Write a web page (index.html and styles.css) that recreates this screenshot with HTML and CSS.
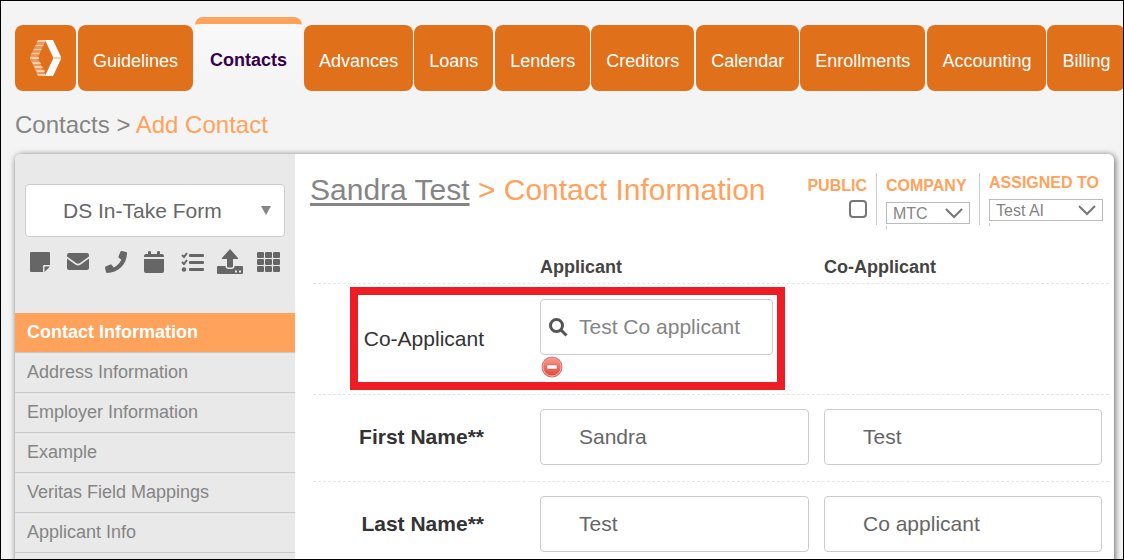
FILE: index.html
```html
<!DOCTYPE html>
<html lang="en">
<head>
  <meta charset="UTF-8" />
  <meta name="viewport" content="width=device-width, initial-scale=1.0"/>
  <title>Add Contact</title>
  <link rel="stylesheet" href="styles.css">
</head>
<body>

  <nav class="tabs">
    <a href="#" class="tab logo" aria-label="Home">
      <svg width="31" height="36" viewBox="0 0 31 36">
        <path fill="#ea9a5e" d="M8 0h8L8 17H0zM0 19h8l8 17H8z"/>
        <path fill="#f6cfb0" d="M8 0h8l-1 2H7zM6 5h8l-1 1H5zM4 9h8l-1 1H3zM2 13h8l-1 1H1zM0 17h9v2H0zM2 22h8l1 2H3zM4 26h8l1 2H5zM6 30h8l1 2H7zM7 34h8l1 2H8z"/>
        <path fill="#fff" d="M15 0h8l8 17h-8zM23 19h8l-8 17h-8z"/>
        <path fill="#f6cfb0" d="M23 17h8v2h-8z"/>
      </svg>
    </a>
    <a href="#" class="tab">Guidelines</a>
    <a href="#" class="tab active">Contacts</a>
    <a href="#" class="tab">Advances</a>
    <a href="#" class="tab">Loans</a>
    <a href="#" class="tab">Lenders</a>
    <a href="#" class="tab">Creditors</a>
    <a href="#" class="tab">Calendar</a>
    <a href="#" class="tab">Enrollments</a>
    <a href="#" class="tab">Accounting</a>
    <a href="#" class="tab">Billing</a>
  </nav>

  <h1 class="breadcrumb">Contacts &gt; <span>Add Contact</span></h1>

  <div class="card">
    <aside class="sidebar">
      <div class="form-picker">
        <select aria-label="Form">
          <option>DS In-Take Form</option>
        </select>
        <svg class="caret" width="10" height="9" viewBox="0 0 10 9"><path fill="#858585" d="M0 0h10L5 9z"/></svg>
      </div>

      <div class="tools">
        <button type="button" aria-label="Note">
          <svg width="20" height="20" viewBox="0 0 20 20"><path d="M1 0h18q1 0 1 1v12h-6q-1 0-1 1v6H1q-1 0-1-1V1q0-1 1-1zM14.500 14.500H20L14.500 20z"/></svg>
        </button>
        <button type="button" aria-label="Email">
          <svg width="22" height="17" viewBox="0 0 22 17"><path d="M2 0h18q2 0 2 2v1.500L13 10q-2 1.500-4 0L0 3.500V2q0-2 2-2zM0 5.500l8.200 6q2.800 2 5.600 0l8.200-6V15q0 2-2 2H2q-2 0-2-2z"/></svg>
        </button>
        <button type="button" aria-label="Call">
          <svg width="22" height="22" viewBox="0 0 512 512"><path d="M493.400 24.600l-104-24c-11.300-2.600-22.900 3.300-27.500 13.900l-48 112c-4.200 9.800-1.400 21.300 6.900 28l60.600 49.600c-36 76.700-98.900 140.500-177.200 177.200l-49.600-60.600c-6.800-8.300-18.200-11.100-28-6.900l-112 48C3.900 366.500-2 378.100.6 389.400l24 104C27.100 504.200 36.700 512 48 512c256.100 0 464-207.500 464-464 0-11.200-7.700-20.900-18.600-23.400z"/></svg>
        </button>
        <button type="button" aria-label="Calendar">
          <svg width="20" height="22" viewBox="0 0 20 22"><path d="M0 6V5q0-2 2-2h2V1q0-1 1.500-1T7 1v2h6V1q0-1 1.500-1T16 1v2h2q2 0 2 2v1zM0 8h20v12q0 2-2 2H2q-2 0-2-2z"/></svg>
        </button>
        <button type="button" aria-label="Tasks">
          <svg width="23" height="20" viewBox="0 0 23 20"><path d="M9 2h13q1 0 1 1v1q0 1-1 1H9q-1 0-1-1V3q0-1 1-1zM9 9h13q1 0 1 1v1q0 1-1 1H9q-1 0-1-1v-1q0-1 1-1zM9 16h13q1 0 1 1v1q0 1-1 1H9q-1 0-1-1v-1q0-1 1-1z"/><circle cx="3" cy="17.500" r="2.200"/><path class="stroke" d="M1 3l2 2 3-4M1 10l2 2 3-4"/></svg>
        </button>
        <button type="button" aria-label="Upload">
          <svg width="26" height="25" viewBox="0 0 26 25"><path d="M13 0l8 9q.500 1-.500 1H16v7q0 1.500-1.500 1.500h-3Q10 18.500 10 17v-7H5.500q-1 0-.500-1z"/><path fill-rule="evenodd" d="M1 17h7.500q0 3 3 3h3q3 0 3-3H25q1 0 1 1v6q0 1-1 1H1q-1 0-1-1v-6q0-1 1-1zM18 21.500v2h2v-2zM22 21.500v2h2v-2z"/></svg>
        </button>
        <button type="button" aria-label="Grid">
          <svg width="23" height="20" viewBox="0 0 23 20"><path d="M1 0h5q1 0 1 1v4q0 1-1 1H1Q0 6 0 5V1q0-1 1-1zM9 0h5q1 0 1 1v4q0 1-1 1H9Q8 6 8 5V1q0-1 1-1zM17 0h5q1 0 1 1v4q0 1-1 1h-5q-1 0-1-1V1q0-1 1-1zM1 7h5q1 0 1 1v4q0 1-1 1H1q-1 0-1-1V8q0-1 1-1zM9 7h5q1 0 1 1v4q0 1-1 1H9q-1 0-1-1V8q0-1 1-1zM17 7h5q1 0 1 1v4q0 1-1 1h-5q-1 0-1-1V8q0-1 1-1zM1 14h5q1 0 1 1v4q0 1-1 1H1q-1 0-1-1v-4q0-1 1-1zM9 14h5q1 0 1 1v4q0 1-1 1H9q-1 0-1-1v-4q0-1 1-1zM17 14h5q1 0 1 1v4q0 1-1 1h-5q-1 0-1-1v-4q0-1 1-1z"/></svg>
        </button>
      </div>

      <ul class="menu">
        <li><a href="#" class="current">Contact Information</a></li>
        <li><a href="#">Address Information</a></li>
        <li><a href="#">Employer Information</a></li>
        <li><a href="#">Example</a></li>
        <li><a href="#">Veritas Field Mappings</a></li>
        <li><a href="#">Applicant Info</a></li>
      </ul>
    </aside>

    <main class="content">
      <div class="content-head">
        <h2><a href="#">Sandra Test</a> &gt; Contact Information</h2>

        <div class="meta">
          <div class="meta-item public">
            <label for="public">PUBLIC</label>
            <input type="checkbox" id="public">
          </div>
          <div class="meta-item company">
            <label for="company">COMPANY</label>
            <div class="mini-select">
              <select id="company"><option>MTC</option></select>
              <svg width="18" height="11" viewBox="0 0 18 11"><path d="M1 1l8 8 8-8"/></svg>
            </div>
          </div>
          <div class="meta-item assigned">
            <label for="assigned">ASSIGNED TO</label>
            <div class="mini-select">
              <select id="assigned"><option>Test AI</option></select>
              <svg width="18" height="11" viewBox="0 0 18 11"><path d="M1 1l8 8 8-8"/></svg>
            </div>
          </div>
        </div>
      </div>

      <form>
        <div class="row row-head">
          <span></span>
          <span>Applicant</span>
          <span>Co-Applicant</span>
        </div>

        <div class="row row-search">
          <label for="coapplicant">Co-Applicant</label>
          <div class="lookup">
            <input type="text" id="coapplicant" placeholder="Test Co applicant">
            <svg class="search-icon" width="19" height="19" viewBox="0 0 19 19"><circle cx="7.500" cy="7.500" r="6"/><path d="M12 12l5.500 5.500"/></svg>
            <button type="button" class="remove" aria-label="Remove">
              <svg width="22" height="22" viewBox="0 0 22 22">
                <defs>
                  <linearGradient id="red" x1="0" y1="0" x2="0" y2="1">
                    <stop offset="0" stop-color="#f29a8c"/>
                    <stop offset="1" stop-color="#e2473b"/>
                  </linearGradient>
                </defs>
                <circle cx="11" cy="11" r="10.500" fill="#d8766f"/>
                <circle cx="11" cy="11" r="9" fill="url(#red)" stroke="#f3aaa2"/>
                <path d="M6 9h10v4H6z" fill="#fff" stroke="#dc5a50" stroke-width=".5"/>
              </svg>
            </button>
          </div>
          <div class="highlight"></div>
        </div>

        <div class="row">
          <label for="first">First Name**</label>
          <input type="text" id="first" value="Sandra">
          <input type="text" aria-label="Co-applicant first name" value="Test">
        </div>

        <div class="row">
          <label for="last">Last Name**</label>
          <input type="text" id="last" value="Test">
          <input type="text" aria-label="Co-applicant last name" value="Co applicant">
        </div>
      </form>
    </main>
  </div>

</body>
</html>
```
FILE: styles.css
```css
* {
  margin: 0;
  padding: 0;
  box-sizing: border-box;
  font-family: "Liberation Sans", Arial, sans-serif;
}

body {
  height: 100vh;
  overflow: hidden;
  padding: 16px 9px 0 14px;
  border: 1px solid #000;
  background-color: #f4f4f4;
  color: #333;
  display: flex;
  flex-direction: column;
}

a {
  text-decoration: none;
}

/* top navigation */
.tabs {
  display: flex;
  align-items: flex-end;
  gap: 1px;
}

.tab {
  flex-shrink: 0;
  padding: 26px 15px 20px;
  border-radius: 8px;
  background-color: #e1701a;
  color: white;
  font-size: 18px;
  line-height: 20px;
}

.tab:nth-child(even),
.tab.active {
  margin-left: 1px;
}

.tab.logo {
  padding: 15px;
}

.tab svg {
  display: block;
}

.tab.active {
  padding: 26px 15px 21px;
  border-top: 7px solid #ffa25c;
  border-radius: 8px 8px 0 0;
  background: linear-gradient(#f9f9f9, #f4f4f4);
  color: #35004d;
  font-weight: bold;
}

.breadcrumb {
  padding: 20px 0 15px;
  color: #858585;
  font-size: 24px;
  font-weight: normal;
  line-height: 28px;
}

.breadcrumb span {
  color: #ffa25c;
}

.card {
  flex: 1 0 auto;
  display: flex;
  border-radius: 6px 6px 0 0;
  background-color: white;
  box-shadow: 1px 1px 6px rgba(0, 0, 0, 0.6);
}

/* sidebar */
.sidebar {
  width: 280px;
  flex-shrink: 0;
  padding-top: 30px;
  border-radius: 6px 0 0 0;
  background-color: #e9e9e9;
}

.form-picker {
  position: relative;
  margin: 0 10px;
}

.form-picker select {
  display: block;
  width: 100%;
  height: 53px;
  padding-left: 37px;
  appearance: none;
  border: 1px solid #ccc;
  border-radius: 4px;
  background-color: white;
  color: #666;
  font-size: 21px;
}

.caret {
  position: absolute;
  right: 14px;
  top: 22px;
}

.tools {
  display: grid;
  grid-template-columns: repeat(7, 1fr);
  align-items: center;
  justify-items: center;
  margin: 12px 8px 39px 6px;
}

.tools button {
  border: none;
  background: none;
  cursor: pointer;
}

.tools svg {
  display: block;
  fill: #666;
}

.tools .stroke {
  fill: none;
  stroke: #666;
  stroke-width: 2;
}

.menu {
  list-style: none;
}

.menu a {
  display: block;
  padding: 9px 12px 10px;
  border-bottom: 1px solid #c8c8c8;
  color: #858585;
  font-size: 18px;
  line-height: 20px;
}

.menu .current {
  background-color: #ffa25c;
  color: white;
  font-weight: bold;
}

/* main content */
.content {
  flex: 1;
  min-width: 0;
}

.content-head {
  display: flex;
  justify-content: space-between;
  align-items: flex-start;
  padding: 19px 11px 0 15px;
}

.content-head h2 {
  color: #ffa25c;
  font-size: 30px;
  font-weight: normal;
  line-height: 34px;
}

.content-head h2 a {
  color: #858585;
  text-decoration: underline;
  text-decoration-thickness: 3px;
  text-underline-offset: 3px;
}

.meta {
  display: flex;
}

.meta-item {
  height: 52px;
  padding: 3px 9px 0;
  border-left: 1px solid #ccc;
}

.meta-item.public {
  display: flex;
  flex-direction: column;
  align-items: flex-end;
  border-left: none;
}

.meta-item.company {
  width: 103px;
}

.meta-item.assigned {
  width: 124px;
  padding: 0 0 0 9px;
}

.meta-item label {
  display: block;
  color: #ffa25c;
  font-size: 16px;
  font-weight: bold;
  line-height: 20px;
}

.meta-item input {
  width: 18px;
  height: 18px;
  margin-top: 4px;
  appearance: none;
  border: 2px solid #767676;
  border-radius: 4px;
  background-color: white;
}

.mini-select {
  position: relative;
  margin-top: 6px;
}

.mini-select::after {
  content: "";
  display: block;
  width: 1px;
  height: 3px;
  margin-top: 2px;
  background-color: #ccc;
}

.mini-select select {
  display: block;
  width: 100%;
  height: 22px;
  padding: 0 6px;
  appearance: none;
  border: 1px solid #bbb;
  border-radius: 0;
  background-color: white;
  color: #858585;
  font-size: 16px;
}

.mini-select svg {
  position: absolute;
  right: 7px;
  top: 6px;
  fill: none;
  stroke: #767676;
  stroke-width: 2;
}

/* form rows */
form {
  padding: 32px 5px 0 18px;
}

.row {
  position: relative;
  display: grid;
  grid-template-columns: 212px 269fr 278fr;
  column-gap: 15px;
  align-items: center;
  padding: 14px 7px 16px 0;
  border-bottom: 1px dashed #e5e5e5;
}

.row label {
  padding-right: 41px;
  text-align: right;
  font-size: 21px;
  font-weight: bold;
}

.row input {
  width: 100%;
  height: 56px;
  padding-left: 38px;
  border: 1px solid #ccc;
  border-radius: 4px;
  background-color: white;
  color: #666;
  font-size: 21px;
}

.row input::placeholder {
  color: #858585;
}

.row-head {
  padding: 0 7px 6px 0;
  color: #444;
  font-size: 18px;
  font-weight: bold;
  line-height: 20px;
}

.row-search {
  padding-top: 15px;
  padding-bottom: 15px;
}

.row-search label {
  font-weight: normal;
}

.lookup {
  position: relative;
  width: 233px;
}

.search-icon {
  position: absolute;
  left: 9px;
  top: 19px;
  fill: none;
  stroke: #555;
  stroke-width: 3;
}

.remove {
  display: block;
  margin: 1px;
  border: none;
  background: none;
}

.remove svg {
  display: block;
}

.highlight {
  position: absolute;
  left: 37px;
  top: 3px;
  bottom: 4px;
  width: 435px;
  border: 8px solid #ee1c25;
}
```
